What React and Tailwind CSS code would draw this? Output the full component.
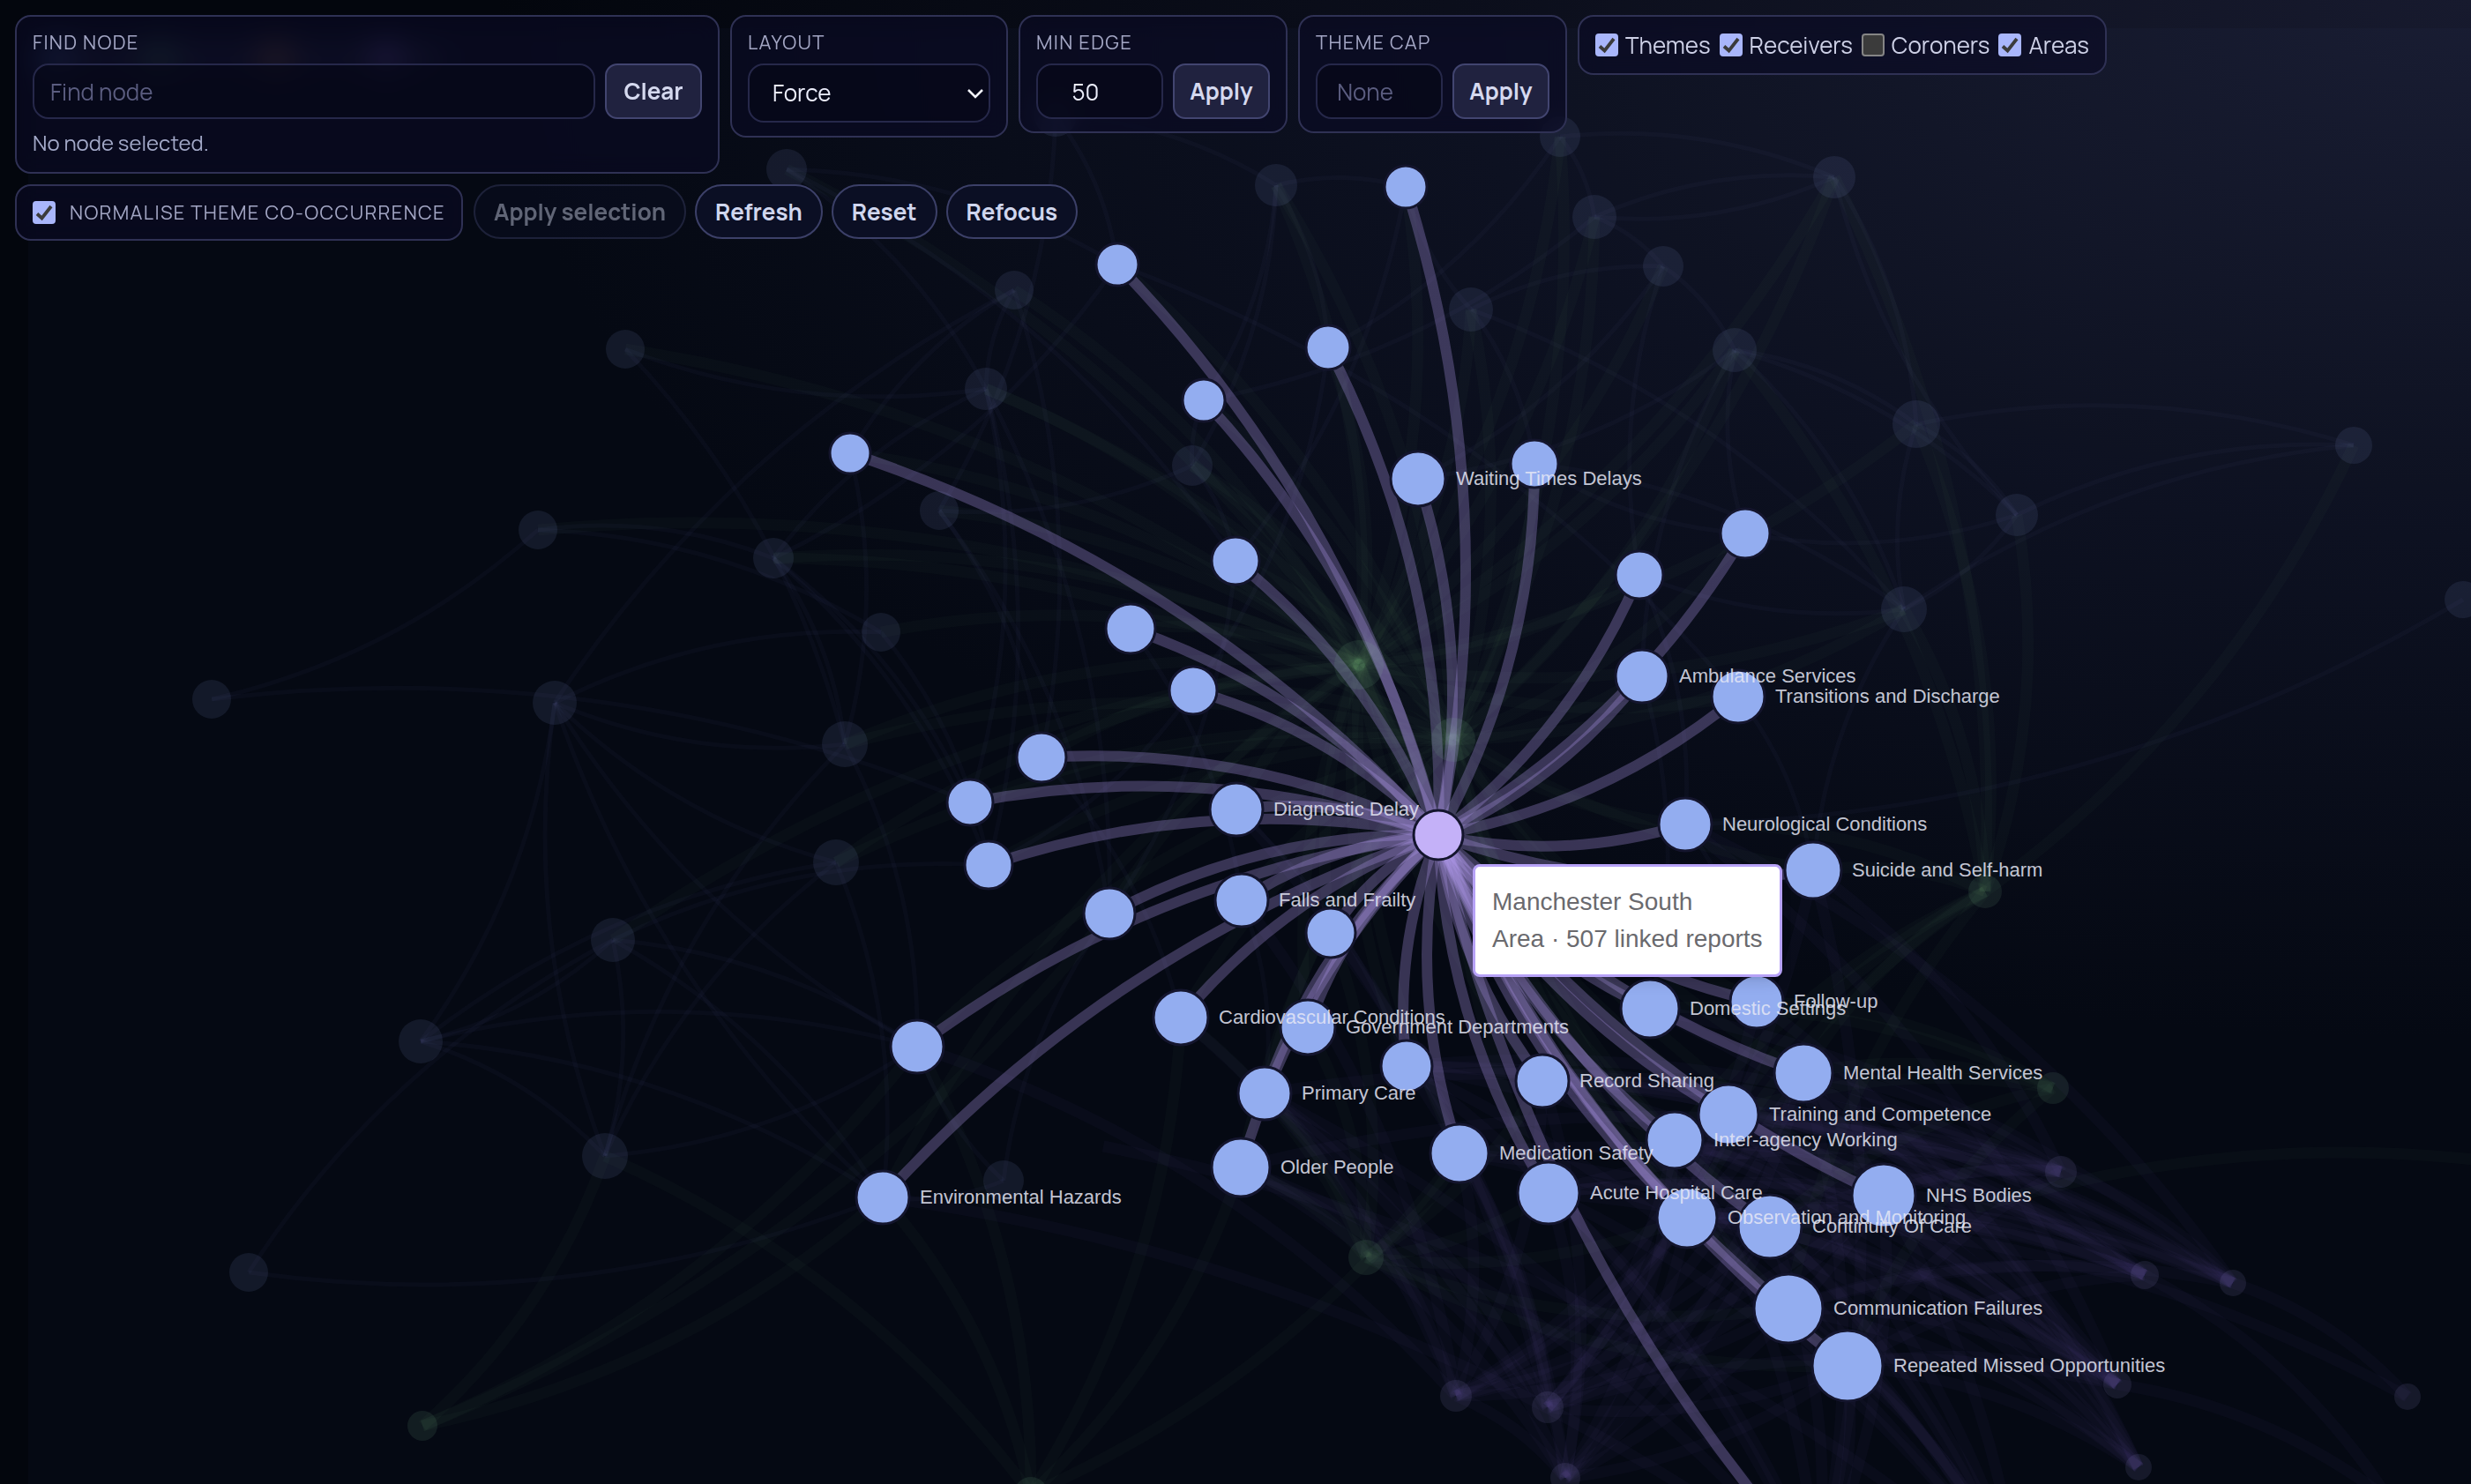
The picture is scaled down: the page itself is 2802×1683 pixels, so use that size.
const CENTER = [1631, 947];

// x, y, radius, label
const THEMES = [
  [1594, 212, 24], [1267, 300, 24], [1506, 394, 25], [1365, 454, 24], [964, 514, 23],
  [1740, 526, 27], [1608, 543, 31, 'Waiting Times Delays'], [1979, 605, 28], [1859, 652, 27],
  [1401, 636, 27], [1282, 713, 28], [1353, 783, 27],
  [1971, 790, 30, 'Transitions and Discharge'], [1862, 767, 30, 'Ambulance Services'],
  [1181, 859, 28], [1100, 910, 26],
  [1402, 918, 30, 'Diagnostic Delay'], [1911, 935, 30, 'Neurological Conditions'],
  [2056, 987, 32, 'Suicide and Self-harm'], [1121, 981, 27], [1258, 1036, 29],
  [1408, 1021, 30, 'Falls and Frailty'], [1509, 1058, 28],
  [1339, 1154, 31, 'Cardiovascular Conditions'], [1483, 1165, 31, 'Government Departments'],
  [1992, 1136, 30, 'Follow-up'], [1871, 1144, 33, 'Domestic Settings'],
  [1040, 1187, 30], [1595, 1209, 29], [1434, 1240, 30, 'Primary Care'],
  [1749, 1226, 30, 'Record Sharing'], [2045, 1217, 33, 'Mental Health Services'],
  [1960, 1264, 34, 'Training and Competence'], [1899, 1293, 32, 'Inter-agency Working'],
  [1655, 1308, 33, 'Medication Safety'], [1407, 1324, 33, 'Older People'],
  [1001, 1358, 30, 'Environmental Hazards'], [1756, 1353, 35, 'Acute Hospital Care'],
  [2136, 1356, 36, 'NHS Bodies'], [1913, 1381, 34, 'Observation and Monitoring'],
  [2007, 1391, 36, 'Continuity Of Care'], [2028, 1484, 39, 'Communication Failures'],
  [2095, 1549, 40, 'Repeated Missed Opportunities'],
];

const DIM = [
  [240, 793, 22], [709, 396, 22], [610, 601, 22], [877, 633, 23], [629, 797, 25], [999, 717, 22],
  [958, 844, 26], [948, 978, 26], [695, 1066, 25], [477, 1181, 25], [686, 1311, 26], [282, 1443, 22],
  [1118, 441, 24], [1150, 329, 22], [1065, 579, 22], [1352, 528, 23], [892, 192, 23], [1138, 1339, 23],
  [1447, 210, 24], [1668, 351, 25], [1769, 155, 23], [1808, 246, 25], [1886, 302, 23], [2080, 201, 24],
  [1967, 397, 25], [2173, 481, 27], [2287, 584, 24], [2159, 691, 26], [2669, 505, 21], [2793, 680, 21],
  [1197, 131, 24],
];

const GREEN = [[1541, 754, 28], [1648, 839, 25], [1549, 1426, 20], [2251, 1011, 19], [2328, 1234, 18], [479, 1617, 17], [1169, 1694, 19]];
const PURPLE = [
  [2337, 1329, 18], [2432, 1446, 16], [2532, 1455, 15], [1651, 1583, 18], [1755, 1596, 18], [1775, 1676, 17],
  [2401, 1570, 16], [2730, 1584, 15], [2425, 1664, 15], [2060, 1790, 20], [2290, 1800, 20], [2710, 1702, 16],
];

const arc = ([x1, y1], [x2, y2], c = 0.13) => {
  const cx = (x1 + x2) / 2 - (y1 - y2) * c;
  const cy = (y1 + y2) / 2 - (x2 - x1) * c;
  return `M${x1} ${y1}Q${cx.toFixed(1)} ${cy.toFixed(1)} ${x2} ${y2}`;
};

const dist = (a, b) => Math.hypot(a[0] - b[0], a[1] - b[1]);

const D = DIM;
const T = THEMES;

const thinPairs = [
  [D[2], D[0]], [D[0], T[15]], [D[1], D[6]], [D[12], D[1]], [D[2], D[5]], [D[2], D[3]],
  [D[4], D[5]], [D[6], D[4]], [D[7], D[4]], [D[4], D[9]], [D[10], D[4]], [D[27], D[28]],
  [T[27], D[4]], [T[36], D[4]], [D[8], D[9]], [D[11], D[8]], [D[8], D[10]], [D[9], D[10]],
  [D[9], T[27]], [D[9], T[36]], [D[9], D[7]], [T[36], D[11]], [T[27], D[10]], [D[10], D[6]],
  [D[10], D[7]], [D[8], T[27]], [D[8], T[36]], [D[8], T[19]], [D[7], T[36]], [D[6], T[27]],
  [D[3], D[12]], [D[3], T[15]], [D[3], T[19]], [D[5], T[19]], [T[4], D[6]], [T[4], D[13]],
  [D[12], D[13]], [D[12], T[15]], [D[12], T[19]], [D[14], T[14]], [D[13], T[14]], [D[16], D[12]],
  [D[16], T[1]], [D[16], T[9]], [D[15], T[3]], [D[15], T[9]], [D[15], D[14]], [D[18], T[0]],
  [D[18], T[2]], [D[18], D[15]], [D[18], T[3]], [D[19], T[5]], [D[19], T[0]], [D[19], D[22]],
  [D[20], D[23]], [D[20], D[21]], [D[21], D[23]], [D[23], D[21]], [D[21], D[22]], [D[22], D[24]],
  [D[24], D[25]], [D[24], D[26]], [D[23], D[25]], [D[26], D[23]], [D[25], D[26]], [D[25], D[28]],
  [D[26], D[28]], [D[26], D[27]], [D[27], T[8]], [D[26], T[7]], [D[24], D[27]], [D[27], D[25]],
  [D[29], T[17]], [T[18], D[27]], [D[19], D[27]], [T[13], D[24]], [T[7], D[24]], [T[5], D[27]],
  [T[7], T[5]], [T[8], D[22]], [D[24], T[6]], [D[22], T[6]], [D[20], T[2]], [D[21], T[3]],
  [D[17], T[27]], [D[17], T[36]], [D[17], T[20]], [D[3], D[6]], [D[4], D[13]], [T[1], D[3]],
  [D[30], D[14]], [D[30], T[1]], [D[30], D[18]], [D[12], T[20]], [D[14], T[20]], [T[1], T[12]],
  [T[0], T[9]], [T[2], T[11]], [T[9], T[20]], [T[10], T[21]], [T[11], T[19]], [T[14], T[23]],
  [T[12], T[18]], [T[13], T[26]], [T[17], T[25]], [T[8], T[17]], [T[16], T[28]], [T[21], T[29]],
];

const greenPairs = [
  ...[1, 2, 3, 5, 6, 7, 8, 12, 13, 14, 15, 16, 18, 19, 20, 21, 22, 23, 24, 25, 27].map((i) => [D[i], GREEN[0]]),
  ...[3, 6, 7, 12, 15, 18, 19, 20, 21, 23, 24, 27].map((i) => [D[i], GREEN[1]]),
  ...T.filter((_, i) => i % 2 === 0).map((t) => [t, GREEN[0]]),
  ...T.filter((_, i) => i % 2 === 1).map((t) => [t, GREEN[1]]),
  ...[24, 25, 26, 27, 28, 23].map((i) => [D[i], GREEN[3]]),
  ...[17, 18, 31, 32, 39, 33, 41].map((i) => [T[i], GREEN[3]]),
  ...[26, 31, 32, 40, 42, 25].map((i) => [T[i], GREEN[4]]),
  ...[23, 24, 29, 30, 34, 35, 37, 39, 22, 41, 42].map((i) => [T[i], GREEN[2]]),
  [D[10], GREEN[5]], [T[27], GREEN[5]], [T[36], GREEN[5]], [T[20], GREEN[5]],
  [D[10], GREEN[6]], [T[36], GREEN[6]], [T[27], GREEN[6]], [T[35], GREEN[6]], [T[23], GREEN[6]], [T[34], GREEN[6]],
  [[2240, 1370], [2960, 1340]],
];

const purplePairs = [];
PURPLE.forEach((p, i) => {
  T.forEach((t, j) => {
    if (t[1] > 900 && t[0] > 1300 && dist(p, t) < 980 && (i * 7 + j * 5) % 9 < (t[1] > 1200 ? (i === 7 || i === 11 ? 2 : 6) : 2)) purplePairs.push([t, p]);
  });
});
purplePairs.push([PURPLE[0], PURPLE[2]], [PURPLE[2], PURPLE[7]], [PURPLE[1], PURPLE[11]], [PURPLE[6], PURPLE[11]], [PURPLE[3], PURPLE[5]], [PURPLE[4], PURPLE[6]]);
purplePairs.push([T[36], PURPLE[9]], [T[27], PURPLE[3]], [[1251, 1300], PURPLE[10]]);

const join = (pairs) => pairs.map(([a, b]) => arc(a, b));

function Network() {
  return (
    <svg className="absolute left-0 top-0 h-[1683px] w-[2802px]" viewBox="0 0 2802 1683" role="img" aria-label="Linked reports network">
      <defs>
        <filter id="soft" x="-100%" y="-100%" width="300%" height="300%">
          <feGaussianBlur stdDeviation="14" />
        </filter>
      </defs>
      <g filter="url(#soft)" opacity="0.6">
        <rect x="50" y="60" width="450" height="14" fill="#6c6a8c" opacity="0.5" />
        <circle cx="64" cy="67" r="16" fill="#4a6cb0" />
        <circle cx="181" cy="67" r="16" fill="#3f7a58" />
        <circle cx="313" cy="67" r="16" fill="#a06a40" />
        <circle cx="438" cy="67" r="16" fill="#7a5cc0" />
      </g>
      <g fill="none" stroke="#9497d8" strokeOpacity="0.036" strokeWidth="5">
        {join(thinPairs).map((d, i) => <path key={i} d={d} />)}
      </g>
      <g fill="none" stroke="#86b08a" strokeOpacity="0.032" strokeWidth="13">
        {join(greenPairs).map((d, i) => <path key={i} d={d} />)}
      </g>
      <g fill="none" stroke="#7c68b8" strokeOpacity="0.042" strokeWidth="13">
        {join(purplePairs).map((d, i) => <path key={i} d={d} />)}
      </g>
      <g fill="none" stroke="#b197ec" strokeOpacity="0.3" strokeWidth="12">
        {THEMES.map((t, i) => <path key={i} d={arc(t, CENTER)} />)}
        <path d={arc([2078, 1800], CENTER)} />
      </g>
      <g fillOpacity="0.1">
        {DIM.map(([x, y, r], i) => <circle key={i} cx={x} cy={y} r={r} fill="#98a8f0" />)}
        {GREEN.map(([x, y, r], i) => <circle key={i} cx={x} cy={y} r={r} fill="#86d09a" />)}
        {PURPLE.map(([x, y, r], i) => <circle key={i} cx={x} cy={y} r={r} fill="#b5a5f5" />)}
      </g>
      <g fill="#93adf0" stroke="#14152d" strokeWidth="3">
        {THEMES.map(([x, y, r], i) => <circle key={i} cx={x} cy={y} r={r} />)}
        <circle cx={CENTER[0]} cy={CENTER[1]} r="28" fill="#c4b1f8" />
      </g>
      <g className="text-[22px]" fill="#e5e7f5" fillOpacity="0.86" fontFamily='"Liberation Sans", Arial, sans-serif'>
        {THEMES.filter((t) => t[3]).map(([x, y, r, label]) => (
          <text key={label} x={x + r + 12} y={y + 7}>{label}</text>
        ))}
      </g>
    </svg>
  );
}

const panel = 'rounded-[18px] border-2 border-[#2f3154] bg-[#0a0a24]/60 backdrop-blur-md px-[18px]';
const caption = 'block text-[22px] leading-[34px] tracking-[0.06em] uppercase text-[#a3a6c4]';
const field = 'h-[63px] rounded-[18px] border-2 border-[#26284a] bg-[#070818]/70 text-[26px] text-[#eceefc] placeholder:text-[#5b5d80] outline-none';
const solid = 'h-[63px] w-[110px] shrink-0 rounded-[14px] border-2 border-[#424570] bg-[#20223f] text-[26px] font-bold text-[#d5d9ef]';
const pill = 'h-[62px] rounded-full border-2 border-[#3c4068] bg-[#0b0f24] px-[21px] text-[26px] font-bold text-[#d0d6ee] disabled:opacity-45';

function Check({ label, defaultChecked, className = '', gap = 'gap-2' }) {
  return (
    <label className={`flex items-center ${gap} ${className}`}>
      <span className="grid h-[26px] w-[26px] shrink-0">
        <input
          type="checkbox"
          defaultChecked={defaultChecked}
          className="peer col-start-1 row-start-1 h-[26px] w-[26px] appearance-none rounded-[4px] border-2 border-[#858585] bg-[#3b3b3b] checked:border-[#a9b6fb] checked:bg-[#a9b6fb]"
        />
        <svg viewBox="0 0 26 26" className="pointer-events-none col-start-1 row-start-1 hidden h-[26px] w-[26px] peer-checked:block" aria-hidden="true">
          <path d="M5 14.500L10.500 19.500 21 6" fill="none" stroke="#3b3b3b" strokeWidth="3.800" />
        </svg>
      </span>
      <span>{label}</span>
    </label>
  );
}

function NumberPanel({ id, label, ...rest }) {
  return (
    <div className={`${panel} pt-3 pb-[14px]`}>
      <label htmlFor={id} className={caption}>{label}</label>
      <div className="mt-[7px] flex gap-[11px]">
        <input id={id} inputMode="numeric" className={`${field} w-[144px] pr-[32px] text-center`} {...rest} />
        <button type="button" className={solid}>Apply</button>
      </div>
    </div>
  );
}

export default function App() {
  return (
    <main className="relative min-h-screen overflow-hidden bg-[#03060d] bg-[radial-gradient(ellipse_80%_70%_at_100%_0%,#171a2e_0%,#0f1222b0_50%,transparent_100%)] font-['Manrope',sans-serif]">
      <div className="absolute top-8 right-0 bottom-0 left-8 bg-[#5070c0]/[0.035]" />
      <Network />

      <div className="relative flex flex-col gap-3 p-[17px]">
        <div className="flex flex-wrap items-start gap-3">
          <div className={`${panel} w-[799px] pt-3 pb-[14px]`}>
            <label htmlFor="find" className={caption}>Find node</label>
            <div className="mt-[7px] flex gap-[11px]">
              <input id="find" placeholder="Find node" className={`${field} min-w-0 flex-1 px-[18px]`} />
              <button type="button" className={solid}>Clear</button>
            </div>
            <p className="mt-2 text-[24px] leading-[38px] text-[#a3a9c8]">No node selected.</p>
          </div>

          <div className={`${panel} pt-3 pb-[15px]`}>
            <label htmlFor="layout" className={caption}>Layout</label>
            <div className="mt-[7px] grid items-center">
              <select id="layout" className="col-start-1 row-start-1 h-[67px] w-[275px] appearance-none rounded-[18px] border-2 border-[#26284a] bg-[#070818]/70 pl-[26px] text-[26px] text-[#eceefc]">
                <option>Force</option>
              </select>
              <svg viewBox="0 0 20 12" className="pointer-events-none col-start-1 row-start-1 mr-[7px] h-[12px] w-[20px] justify-self-end" aria-hidden="true">
                <path d="M2 2l8 8 8-8" fill="none" stroke="#f2f3fc" strokeWidth="2.500" />
              </svg>
            </div>
          </div>

          <NumberPanel id="min-edge" label="Min edge" defaultValue="50" />
          <NumberPanel id="theme-cap" label="Theme cap" placeholder="None" />

          <div className={`${panel} flex h-[68px] items-center gap-[10px] text-[26px] text-[#cdd0e6]`}>
            <Check label="Themes" defaultChecked />
            <Check label="Receivers" defaultChecked />
            <Check label="Coroners" />
            <Check label="Areas" defaultChecked />
          </div>
        </div>

        <div className="flex flex-wrap items-start gap-[10px]">
          <div className={`${panel} mr-[2px] flex h-[64px] items-center`}>
            <Check label="Normalise theme co-occurrence" defaultChecked gap="gap-4" className="text-[22px] tracking-[0.06em] uppercase text-[#a3a6c4]" />
          </div>
          <button type="button" disabled className={pill}>Apply selection</button>
          <button type="button" className={pill}>Refresh</button>
          <button type="button" className={pill}>Reset</button>
          <button type="button" className={pill}>Refocus</button>
        </div>
      </div>

      <div role="tooltip" className="absolute top-[980px] left-[1670px] rounded-[8px] border-[3px] border-[#b7a2f7] bg-white px-[19px] py-[19px] font-['Liberation_Sans',Arial,sans-serif] text-[28px] leading-[42px] whitespace-nowrap text-[#6a6a6e] shadow-lg">
        <p>Manchester South</p>
        <p>Area · 507 linked reports</p>
      </div>
    </main>
  );
}
